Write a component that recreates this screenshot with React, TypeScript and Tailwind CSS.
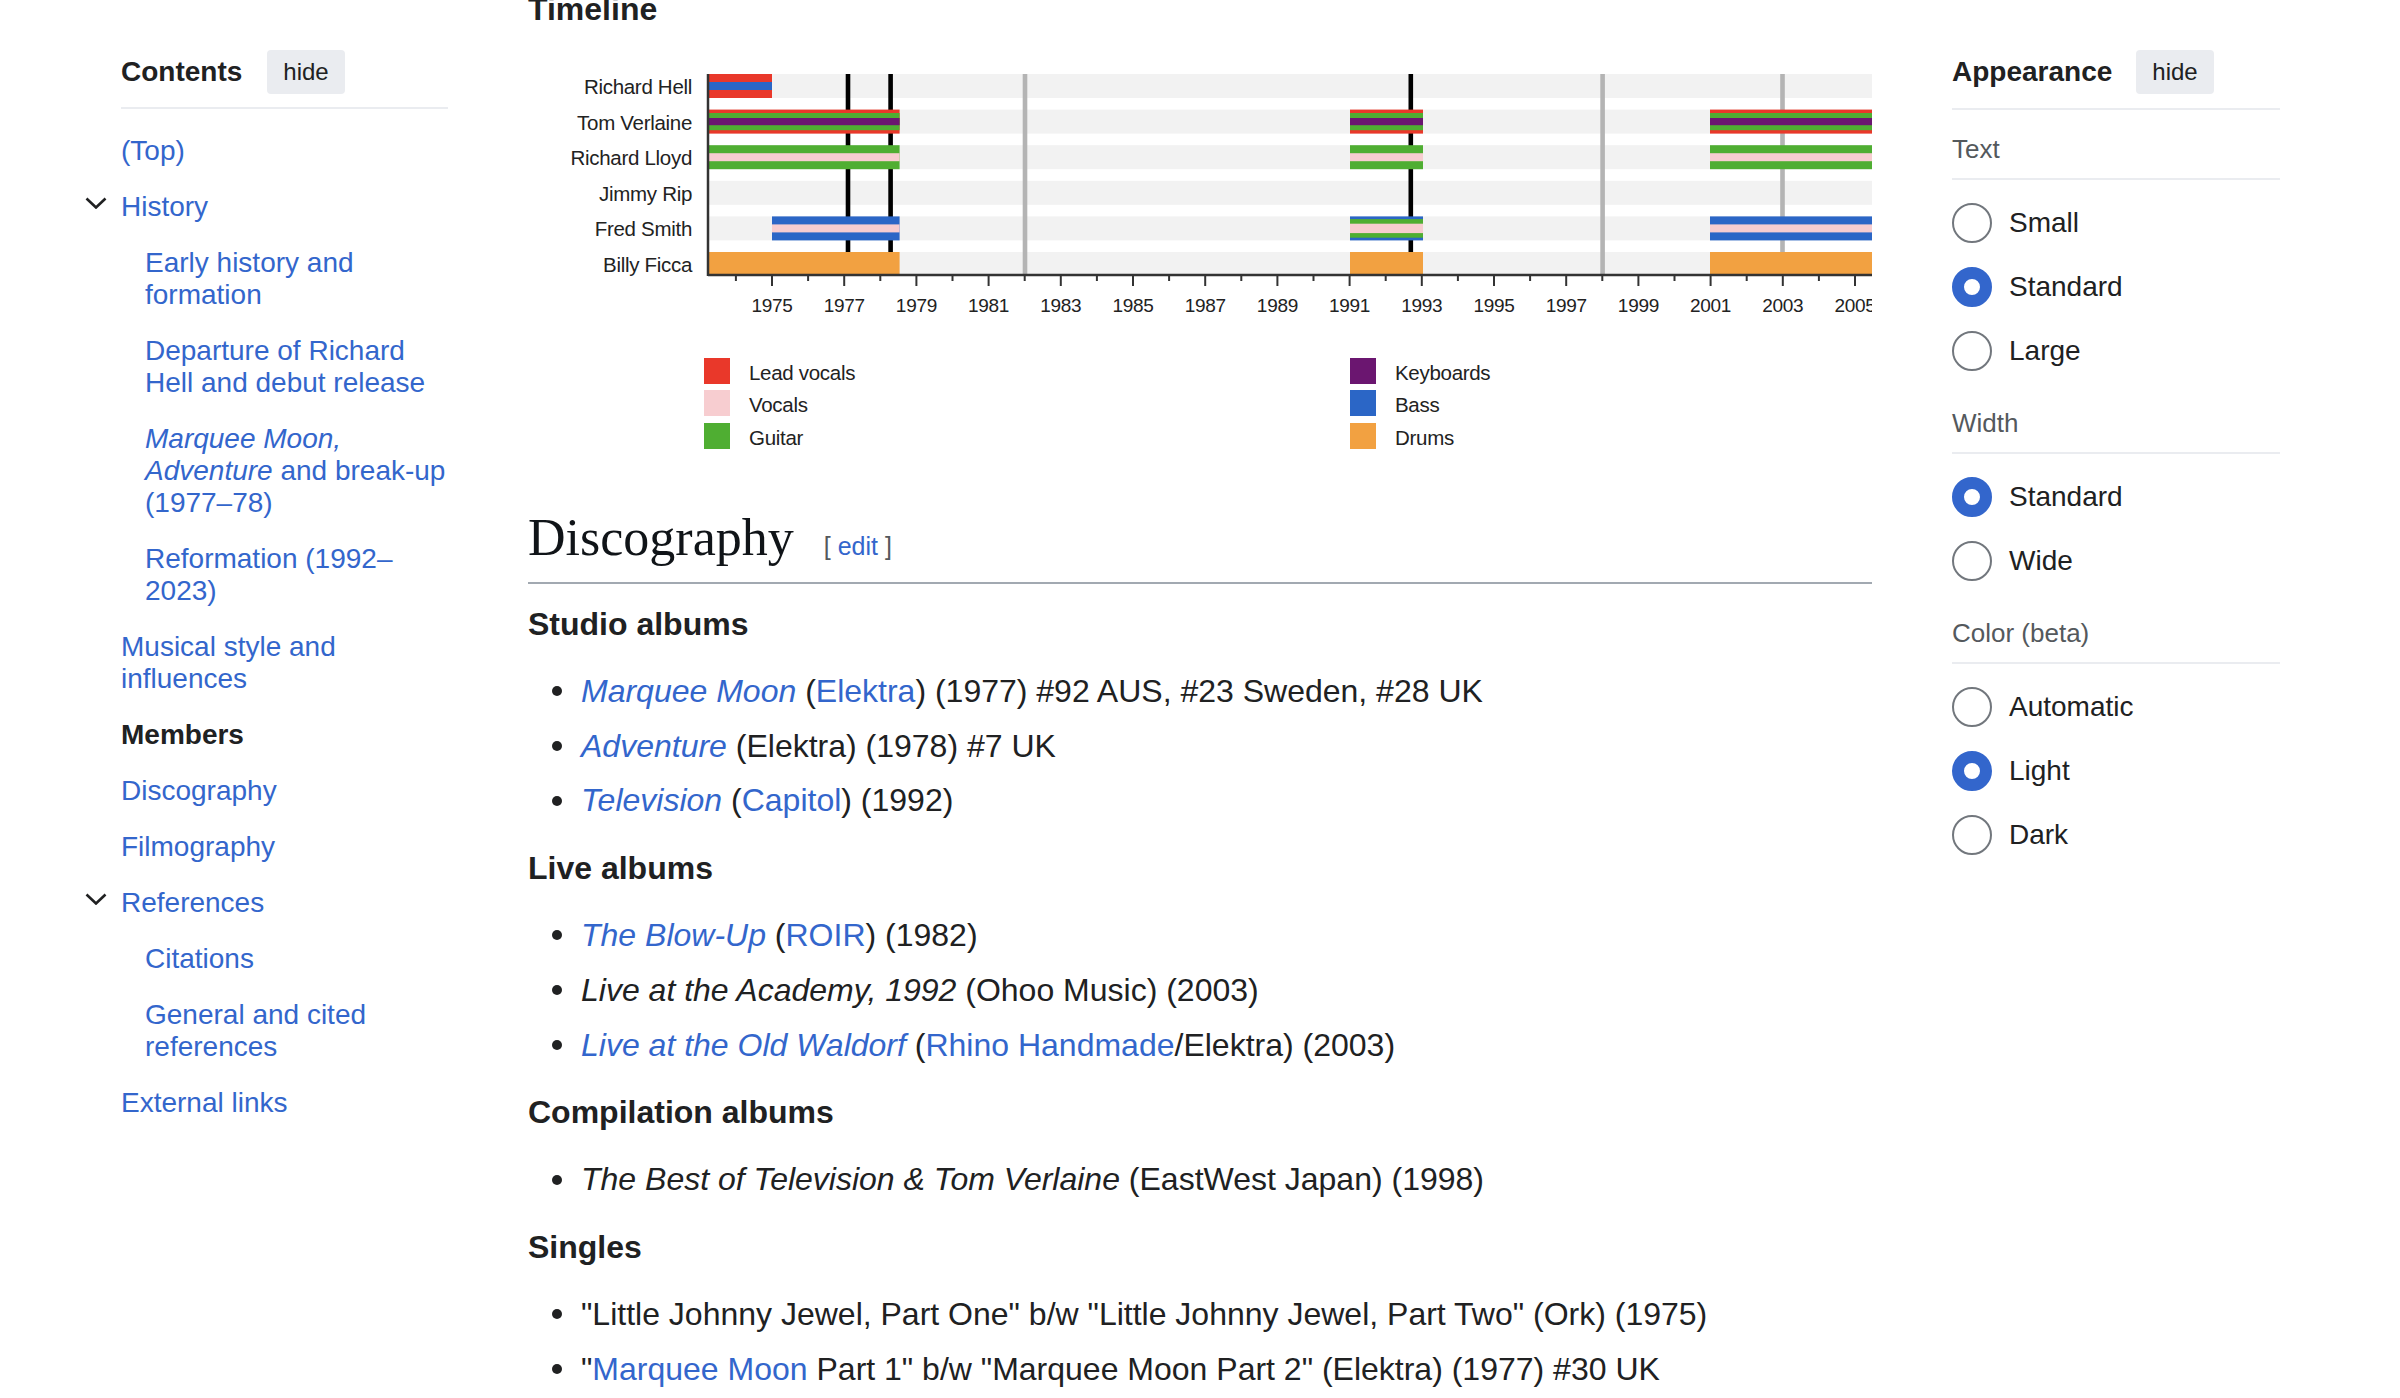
import React from 'react';

const SANS = { fontFamily: '"Liberation Sans", Arial, sans-serif' };
const SERIF = { fontFamily: '"Liberation Serif", "Times New Roman", serif' };

type TocItem = { label: React.ReactNode; level: number; chevron?: boolean; active?: boolean };

const TOC: TocItem[] = [
  { label: '(Top)', level: 0 },
  { label: 'History', level: 0, chevron: true },
  { label: 'Early history and formation', level: 1 },
  { label: 'Departure of Richard Hell and debut release', level: 1 },
  {
    label: (
      <>
        <i>Marquee Moon,</i>
        <br />
        <i>Adventure</i> and break-up (1977–78)
      </>
    ),
    level: 1,
  },
  { label: 'Reformation (1992–2023)', level: 1 },
  { label: 'Musical style and influences', level: 0 },
  { label: 'Members', level: 0, active: true },
  { label: 'Discography', level: 0 },
  { label: 'Filmography', level: 0 },
  { label: 'References', level: 0, chevron: true },
  { label: 'Citations', level: 1 },
  { label: 'General and cited references', level: 1 },
  { label: 'External links', level: 0 },
];

// timeline colours
const C = {
  red: '#e9382a',
  pink: '#f7cdd0',
  green: '#4fae32',
  purple: '#6b1670',
  blue: '#2b66c6',
  orange: '#f2a141',
};

const X = (yr: number) => 244 + (yr - 1975) * 36.1;
const PLOT_L = 180;
const PLOT_R = 1344;
const AXIS_Y = 246;
const ROWS = ['Richard Hell', 'Tom Verlaine', 'Richard Lloyd', 'Jimmy Rip', 'Fred Smith', 'Billy Ficca'];
const rowTop = (i: number) => 45 + i * 35.6;
const rowH = (i: number) => (i === 5 ? 23 : 24);

type Layer = { color: string; off: number; h: number };
type Seg = { row: number; x1: number; x2: number; layers: Layer[] };

const ERA1_END = 371.6;
const ERA2 = [822, 895];
const ERA3_START = 1182;

const tv: Layer[] = [
  { color: C.red, off: 0, h: 24 },
  { color: C.green, off: 3.4, h: 17.2 },
  { color: C.purple, off: 8.4, h: 7.2 },
];
const rl: Layer[] = [
  { color: C.green, off: 0, h: 24 },
  { color: C.pink, off: 8, h: 8 },
];
const fs: Layer[] = [
  { color: C.blue, off: 0, h: 24 },
  { color: C.pink, off: 8, h: 8 },
];
const fs2: Layer[] = [
  { color: C.blue, off: 0, h: 24 },
  { color: C.green, off: 2.7, h: 18.6 },
  { color: C.pink, off: 7.3, h: 9.4 },
];
const bf: Layer[] = [{ color: C.orange, off: 0, h: 23 }];

const SEGS: Seg[] = [
  {
    row: 0,
    x1: PLOT_L,
    x2: X(1975),
    layers: [
      { color: C.red, off: 0, h: 24 },
      { color: C.blue, off: 8, h: 8 },
    ],
  },
  { row: 1, x1: PLOT_L, x2: ERA1_END, layers: tv },
  { row: 1, x1: ERA2[0], x2: ERA2[1], layers: tv },
  { row: 1, x1: ERA3_START, x2: PLOT_R, layers: tv },
  { row: 2, x1: PLOT_L, x2: ERA1_END, layers: rl },
  { row: 2, x1: ERA2[0], x2: ERA2[1], layers: rl },
  { row: 2, x1: ERA3_START, x2: PLOT_R, layers: rl },
  { row: 4, x1: X(1975), x2: ERA1_END, layers: fs },
  { row: 4, x1: ERA2[0], x2: ERA2[1], layers: fs2 },
  { row: 4, x1: ERA3_START, x2: PLOT_R, layers: fs },
  { row: 5, x1: PLOT_L, x2: ERA1_END, layers: bf },
  { row: 5, x1: ERA2[0], x2: ERA2[1], layers: bf },
  { row: 5, x1: ERA3_START, x2: PLOT_R, layers: bf },
];

const EVENTS = [
  { x: 320, color: '#000000' },
  { x: 362.6, color: '#000000' },
  { x: 882.8, color: '#000000' },
  { x: 497, color: '#b4b4b4' },
  { x: 1074.6, color: '#b4b4b4' },
  { x: 1254.5, color: '#b4b4b4' },
];

const LEGEND = [
  { x: 176, y: 329, color: C.red, label: 'Lead vocals' },
  { x: 176, y: 361, color: C.pink, label: 'Vocals' },
  { x: 176, y: 394, color: C.green, label: 'Guitar' },
  { x: 822, y: 329, color: C.purple, label: 'Keyboards' },
  { x: 822, y: 361, color: C.blue, label: 'Bass' },
  { x: 822, y: 394, color: C.orange, label: 'Drums' },
];

const years: number[] = [];
for (let y = 1974; y <= 2005; y++) years.push(y);

const Timeline = () => (
  <svg width={1344} height={479} className="block" style={SANS}>
    {ROWS.map((_, i) => (
      <rect key={i} x={PLOT_L} y={rowTop(i)} width={PLOT_R - PLOT_L} height={rowH(i)} fill="#f2f2f2" />
    ))}
    {EVENTS.map((e, i) => (
      <rect key={i} x={e.x - 2.3} y={rowTop(0)} width={4.6} height={AXIS_Y - rowTop(0)} fill={e.color} />
    ))}
    {SEGS.map((s, i) =>
      s.layers.map((l, j) => (
        <rect key={`${i}-${j}`} x={s.x1} y={rowTop(s.row) + l.off} width={s.x2 - s.x1} height={l.h} fill={l.color} />
      ))
    )}
    {ROWS.map((name, i) => (
      <text key={name} x={164} y={rowTop(i) + 20} textAnchor="end" fontSize={20.5} fill="#222" letterSpacing={-0.3}>
        {name}
      </text>
    ))}
    <line x1={PLOT_L} y1={rowTop(0)} x2={PLOT_L} y2={AXIS_Y + 1} stroke="#333" strokeWidth={2.5} />
    <line x1={PLOT_L} y1={AXIS_Y} x2={PLOT_R} y2={AXIS_Y} stroke="#333" strokeWidth={2.5} />
    {years.map((y) => (
      <line
        key={y}
        x1={X(y)}
        y1={AXIS_Y}
        x2={X(y)}
        y2={AXIS_Y + (y % 2 === 1 ? 11 : 6)}
        stroke="#333"
        strokeWidth={2}
      />
    ))}
    {years
      .filter((y) => y % 2 === 1)
      .map((y) => (
        <text key={y} x={X(y)} y={283} textAnchor="middle" fontSize={19} fill="#222" letterSpacing={-0.3}>
          {y}
        </text>
      ))}
    {LEGEND.map((l) => (
      <g key={l.label}>
        <rect x={l.x} y={l.y} width={26} height={26} fill={l.color} />
        <text x={l.x + 45} y={l.y + 22} fontSize={20.5} fill="#222" letterSpacing={-0.3}>
          {l.label}
        </text>
      </g>
    ))}
  </svg>
);

const Chevron = () => (
  <svg width="22" height="12" viewBox="0 0 22 12" className="mt-[6px] ml-[-1px]">
    <path d="M1.5 1.5 L11 10.5 L20.5 1.5" fill="none" stroke="#202122" strokeWidth="2.6" />
  </svg>
);

const HideButton = () => (
  <button className="h-[44px] px-[16px] rounded-[4px] bg-[#eaecf0] text-[24px] leading-[44px] text-[#202122]">
    hide
  </button>
);

const Radio = ({ label, checked }: { label: string; checked?: boolean }) => (
  <div className="flex items-center h-[40px] mb-[24px] last:mb-0">
    <span
      className={
        checked
          ? 'w-[40px] h-[40px] rounded-full border-[12px] border-[#3366cc] bg-white'
          : 'w-[40px] h-[40px] rounded-full border-2 border-[#72777d] bg-white'
      }
    />
    <span className="ml-[17px] text-[28px] text-[#202122]">{label}</span>
  </div>
);

const Section = ({
  title,
  options,
  checked,
  first,
}: {
  title: string;
  options: string[];
  checked: string;
  first?: boolean;
}) => (
  <div className={first ? 'mt-[23px]' : 'mt-[36px]'}>
    <div className="text-[26px] leading-[32px] text-[#54595d] pb-[13px] border-b-2 border-[#eaecf0]">{title}</div>
    <div className="pt-[23px]">
      {options.map((o) => (
        <Radio key={o} label={o} checked={o === checked} />
      ))}
    </div>
  </div>
);

const Bullet = ({ children }: { children: React.ReactNode }) => (
  <li className="flex items-center leading-[54.7px] whitespace-nowrap">
    <span className="w-[10px] h-[10px] rounded-full bg-[#202122] ml-[24px] mr-[19px] shrink-0" />
    <span>{children}</span>
  </li>
);

const A = ({ children, i }: { children: React.ReactNode; i?: boolean }) => (
  <a className={i ? 'text-[#3366cc] italic' : 'text-[#3366cc]'}>{children}</a>
);

const H3 = ({ children }: { children: React.ReactNode }) => (
  <h3 className="mt-[20px] mb-[20px] text-[32px] leading-[40px] font-bold text-[#202122]">{children}</h3>
);

export default function App() {
  return (
    <div className="h-[1398px] overflow-hidden bg-white text-[#202122]" style={SANS}>
      <div className="flex pl-[86px]">
        {/* table of contents */}
        <aside className="w-[362px] shrink-0 pt-[50px]">
          <div className="ml-[35px] flex items-center h-[44px] box-content pb-[13px] border-b-2 border-[#eaecf0]">
            <span className="text-[28px] font-bold text-[#202122]">Contents</span>
            <span className="ml-[25px]">
              <HideButton />
            </span>
          </div>
          <ul className="mt-[14px]">
            {TOC.map((t, i) => (
              <li key={i} className="flex py-[12px] text-[28px] leading-[32px]">
                <div className="w-[35px] shrink-0">{t.chevron && <Chevron />}</div>
                <div
                  className={
                    (t.level === 1 ? 'pl-[24px] ' : '') +
                    (t.active ? 'font-bold text-[#202122]' : 'text-[#3366cc]') +
                    ' w-[327px]'
                  }
                >
                  {t.label}
                </div>
              </li>
            ))}
          </ul>
        </aside>

        {/* article */}
        <main className="ml-[80px] w-[1344px] shrink-0 -mt-[11px] text-[32px]">
          <h3 className="text-[32px] leading-[40px] font-bold text-[#202122]">Timeline</h3>
          <Timeline />
          <h2 className="flex items-baseline h-[60px] box-content pb-[14px] border-b-2 border-[#a2a9b1]">
            <span className="text-[52px] leading-[60px] text-[#101418]" style={SERIF}>
              Discography
            </span>
            <span className="ml-[30px] text-[25px] text-[#54595d]">
              [ <a className="text-[#3366cc]">edit</a> ]
            </span>
          </h2>

          <H3>Studio albums</H3>
          <ul>
            <Bullet>
              <A i>Marquee Moon</A> (<A>Elektra</A>) (1977) #92 AUS, #23 Sweden, #28 UK
            </Bullet>
            <Bullet>
              <A i>Adventure</A> (Elektra) (1978) #7 UK
            </Bullet>
            <Bullet>
              <A i>Television</A> (<A>Capitol</A>) (1992)
            </Bullet>
          </ul>

          <H3>Live albums</H3>
          <ul>
            <Bullet>
              <A i>The Blow-Up</A> (<A>ROIR</A>) (1982)
            </Bullet>
            <Bullet>
              <i>Live at the Academy, 1992</i> (Ohoo Music) (2003)
            </Bullet>
            <Bullet>
              <A i>Live at the Old Waldorf</A> (<A>Rhino Handmade</A>/Elektra) (2003)
            </Bullet>
          </ul>

          <H3>Compilation albums</H3>
          <ul>
            <Bullet>
              <i>The Best of Television &amp; Tom Verlaine</i> (EastWest Japan) (1998)
            </Bullet>
          </ul>

          <H3>Singles</H3>
          <ul>
            <Bullet>"Little Johnny Jewel, Part One" b/w "Little Johnny Jewel, Part Two" (Ork) (1975)</Bullet>
            <Bullet>
              "<A>Marquee Moon</A> Part 1" b/w "Marquee Moon Part 2" (Elektra) (1977) #30 UK
            </Bullet>
          </ul>
        </main>

        {/* appearance */}
        <aside className="ml-[80px] w-[328px] shrink-0 pt-[50px]">
          <div className="flex items-center h-[44px] box-content pb-[14px] border-b-2 border-[#eaecf0]">
            <span className="text-[28px] font-bold text-[#202122]">Appearance</span>
            <span className="ml-[24px]">
              <HideButton />
            </span>
          </div>
          <Section first title="Text" options={['Small', 'Standard', 'Large']} checked="Standard" />
          <Section title="Width" options={['Standard', 'Wide']} checked="Standard" />
          <Section title="Color (beta)" options={['Automatic', 'Light', 'Dark']} checked="Light" />
        </aside>
      </div>
    </div>
  );
}
